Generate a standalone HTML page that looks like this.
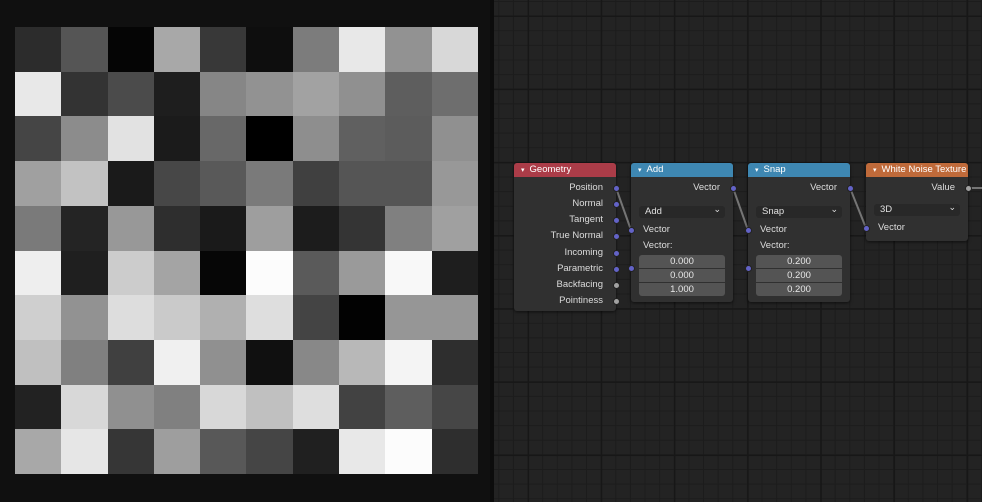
<!DOCTYPE html>
<html><head><meta charset="utf-8"><style>
*{margin:0;padding:0;box-sizing:border-box}
body{width:982px;height:502px;overflow:hidden;background:#101010;font-family:"Liberation Sans","DejaVu Sans",sans-serif;position:relative}
#grid{position:absolute;left:15px;top:27px;width:463px;height:447px;display:grid;grid-template-columns:repeat(10,1fr);grid-template-rows:repeat(10,1fr)}
#ne{position:absolute;left:494px;top:0;width:488px;height:502px;background-color:#232323;
background-image:
linear-gradient(to right,#171717 0 1.3px,transparent 1.3px),
linear-gradient(to bottom,#171717 0 1.3px,transparent 1.3px),
linear-gradient(to right,#1c1c1c 0 1px,transparent 1px),
linear-gradient(to bottom,#1c1c1c 0 1px,transparent 1px);
background-size:73.2px 73.2px,73.2px 73.2px,14.64px 14.64px,14.64px 14.64px;
background-position:33.6px 0,0 15.5px,4.3px 0,0 1px}
#ne2{position:absolute;left:490px;top:0;width:4px;height:502px;background:#0c0c0c}
.node{position:absolute;background:#303030;border-radius:3px;box-shadow:0 1px 3px rgba(0,0,0,.6);font-size:9.5px;color:#dcdcdc}
.hd{height:14px;border-radius:3px 3px 0 0;padding-left:7px;line-height:14px;color:#fff;font-size:9.5px}
.hd:before{content:"▾";font-size:7px;margin-right:5px}
.t{position:absolute;line-height:12px;white-space:nowrap}
.r{text-align:right}
.sk{position:absolute;width:7px;height:7px;border-radius:50%;background:#6363c7;border:0.5px solid #222}
.g{background:#a1a1a1}
.dd{position:absolute;height:12px;background:#282828;border-radius:3px;padding-left:6px;line-height:12px;font-size:9.5px;color:#e0e0e0}
.dd:after{content:"⌄";position:absolute;right:4px;top:-3px;font-size:9px}
.f{position:absolute;height:13px;background:#545454;text-align:center;line-height:13px;font-size:9.5px;color:#e8e8e8}
</style></head><body>
<div id="grid"></div>
<div id="ne2"></div>
<div id="ne"></div>
<svg style="position:absolute;left:0;top:0" width="982" height="502">
<g stroke="#8a8a8a" stroke-width="2" fill="none" opacity=".8">
<path d="M616 188 L631 230"/><path d="M733 188 L748 230"/><path d="M850 188 L866 228"/><path d="M968 188 L982 188"/>
</g></svg>

<div class="node" style="left:514px;top:163px;width:102px;height:148px">
<div class="hd" style="background:#ab3c48">Geometry</div>
<div class="t r" style="right:13px;top:19px">Position</div>
<div class="t r" style="right:13px;top:35px">Normal</div>
<div class="t r" style="right:13px;top:51px">Tangent</div>
<div class="t r" style="right:13px;top:67px">True Normal</div>
<div class="t r" style="right:13px;top:84px">Incoming</div>
<div class="t r" style="right:13px;top:100px">Parametric</div>
<div class="t r" style="right:13px;top:116px">Backfacing</div>
<div class="t r" style="right:13px;top:132px">Pointiness</div>
<div class="sk" style="left:98.5px;top:21.5px"></div><div class="sk" style="left:98.5px;top:37.5px"></div>
<div class="sk" style="left:98.5px;top:53.5px"></div><div class="sk" style="left:98.5px;top:69.5px"></div>
<div class="sk" style="left:98.5px;top:86.5px"></div><div class="sk" style="left:98.5px;top:102.5px"></div>
<div class="sk g" style="left:98.5px;top:118.5px"></div><div class="sk g" style="left:98.5px;top:134.5px"></div>
</div>

<div class="node" style="left:631px;top:163px;width:102px;height:139px">
<div class="hd" style="background:#3e87b2">Add</div>
<div class="t r" style="right:13px;top:19px">Vector</div>
<div class="dd" style="left:8px;top:43px;width:86px">Add</div>
<div class="t" style="left:12px;top:61px">Vector</div>
<div class="t" style="left:12px;top:77px">Vector:</div>
<div class="f" style="left:8px;top:92px;width:86px;border-radius:3px 3px 0 0">0.000</div>
<div class="f" style="left:8px;top:106px;width:86px">0.000</div>
<div class="f" style="left:8px;top:120px;width:86px;border-radius:0 0 3px 3px">1.000</div>
<div class="sk" style="left:98.5px;top:21.5px"></div>
<div class="sk" style="left:-3.5px;top:63.5px"></div><div class="sk" style="left:-3.5px;top:101.5px"></div>
</div>

<div class="node" style="left:748px;top:163px;width:102px;height:139px">
<div class="hd" style="background:#3e87b2">Snap</div>
<div class="t r" style="right:13px;top:19px">Vector</div>
<div class="dd" style="left:8px;top:43px;width:86px">Snap</div>
<div class="t" style="left:12px;top:61px">Vector</div>
<div class="t" style="left:12px;top:77px">Vector:</div>
<div class="f" style="left:8px;top:92px;width:86px;border-radius:3px 3px 0 0">0.200</div>
<div class="f" style="left:8px;top:106px;width:86px">0.200</div>
<div class="f" style="left:8px;top:120px;width:86px;border-radius:0 0 3px 3px">0.200</div>
<div class="sk" style="left:98.5px;top:21.5px"></div>
<div class="sk" style="left:-3.5px;top:63.5px"></div><div class="sk" style="left:-3.5px;top:101.5px"></div>
</div>

<div class="node" style="left:866px;top:163px;width:102px;height:78px">
<div class="hd" style="background:#bf6a3a">White Noise Texture</div>
<div class="t r" style="right:13px;top:19px">Value</div>
<div class="dd" style="left:8px;top:41px;width:86px">3D</div>
<div class="t" style="left:12px;top:59px">Vector</div>
<div class="sk g" style="left:98.5px;top:21.5px"></div>
<div class="sk" style="left:-3.5px;top:61.5px"></div>
</div>

<script>
var v=["2c","55","05","a8","38","0e","7c","e8","92","d8",
"e8","33","4b","1e","86","92","a2","90","5e","6e",
"45","8c","e2","1b","68","00","8e","60","5c","90",
"a0","c2","1a","47","59","7a","40","55","55","98",
"7a","24","98","2e","1a","9e","1c","34","80","a0",
"ee","1f","cc","a4","06","fc","5a","9a","f8","1e",
"cf","92","dd","ca","b0","de","44","02","96","96",
"c0","80","40","f0","90","10","88","b8","f4","2e",
"22","d8","90","80","d8","c0","de","42","5e","46",
"a8","e6","36","9e","58","45","20","e8","fc","2e"];
var g=document.getElementById("grid");
v.forEach(function(c){var d=document.createElement("div");d.style.background="#"+c+c+c;g.appendChild(d);});
</script>
</body></html>
